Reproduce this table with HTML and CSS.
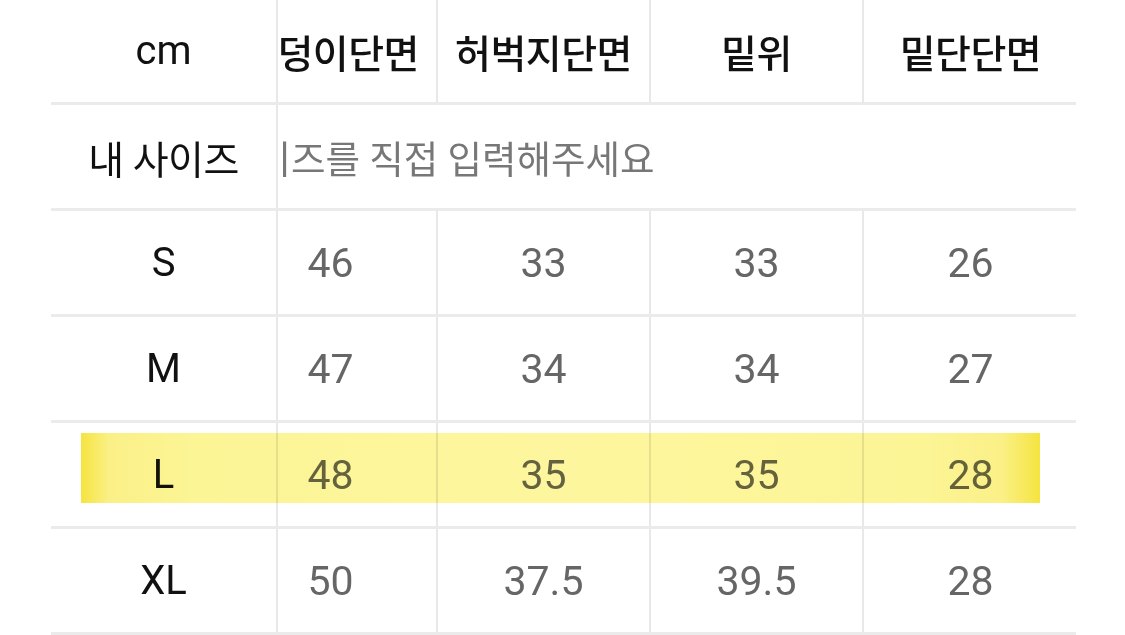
FILE: index.html
```html
<!DOCTYPE html>
<html lang="ko">
<head>
<meta charset="utf-8">
<link rel="stylesheet" href="styles.css">
</head>
<body>
<div class="sheet">
  <div class="row head">
    <div class="label">cm</div>
    <div class="scroll"><div class="track">
      <div class="cell">엉덩이단면</div>
      <div class="cell">허벅지단면</div>
      <div class="cell">밑위</div>
      <div class="cell last">밑단단면</div>
    </div></div>
  </div>
  <div class="row mine">
    <div class="label kr">내 사이즈</div>
    <div class="scroll"><div class="track">
      <div class="input">사이즈를 직접 입력해주세요</div>
    </div></div>
  </div>
  <div class="row">
    <div class="label">S</div>
    <div class="scroll"><div class="track">
      <div class="cell val">46</div><div class="cell val">33</div><div class="cell val">33</div><div class="cell val last">26</div>
    </div></div>
  </div>
  <div class="row">
    <div class="label">M</div>
    <div class="scroll"><div class="track">
      <div class="cell val">47</div><div class="cell val">34</div><div class="cell val">34</div><div class="cell val last">27</div>
    </div></div>
  </div>
  <div class="row marked">
    <div class="label">L</div>
    <div class="scroll"><div class="track">
      <div class="cell val">48</div><div class="cell val">35</div><div class="cell val">35</div><div class="cell val last">28</div>
    </div></div>
    <div class="highlight"></div>
  </div>
  <div class="row">
    <div class="label">XL</div>
    <div class="scroll"><div class="track">
      <div class="cell val">50</div><div class="cell val">37.5</div><div class="cell val">39.5</div><div class="cell val last">28</div>
    </div></div>
  </div>
</div>
</body>
</html>
```

FILE: styles.css
```css
* { box-sizing: border-box; }
html, body { margin: 0; padding: 0; background: #fff; }
body {
  width: 1125px;
  height: 635px;
  overflow: hidden;
  font-family: Roboto, "Noto Sans CJK KR", sans-serif;
  color: #111;
}
.sheet {
  margin: -1px 0 0 51px;
  width: 1025px;
}
.row {
  position: relative;
  display: flex;
  height: 106px;
  border-bottom: 3px solid #ebebeb;
}
.label {
  flex: 0 0 227px;
  display: flex;
  align-items: center;
  justify-content: center;
  border-right: 2px solid #e8e8e8;
  font-size: 40px;
  color: #111;
  background: #fff;
  position: relative;
  z-index: 1;
}
.label.kr {
  font-size: 39px;
  letter-spacing: -0.5px;
}
.scroll {
  flex: 1;
  overflow: hidden;
}
.track {
  display: flex;
  height: 100%;
  margin-left: -53px;
}
.cell {
  flex: 0 0 213px;
  display: flex;
  align-items: center;
  justify-content: center;
  border-right: 2px solid #e8e8e8;
  white-space: nowrap;
}
.cell.last { border-right: 0; }
.head .cell {
  font-size: 39px;
  font-weight: 500;
  letter-spacing: -0.5px;
  color: #111;
}
.val {
  font-size: 41px;
  color: #666;
}
.input {
  display: flex;
  align-items: center;
  margin-left: -3px;
  font-size: 37.5px;
  color: #777;
  white-space: nowrap;
}
.highlight {
  position: absolute;
  left: 30px;
  top: 10px;
  width: 959px;
  height: 70px;
  background: linear-gradient(90deg, #f5e440 0, #fbf087 3%, #fcf596 12%, #fdf69e 50%, #fcf596 88%, #fbf087 96%, #f5e440 100%);
  mix-blend-mode: multiply;
  filter: blur(0.6px);
  pointer-events: none;
  z-index: 2;
}
```
